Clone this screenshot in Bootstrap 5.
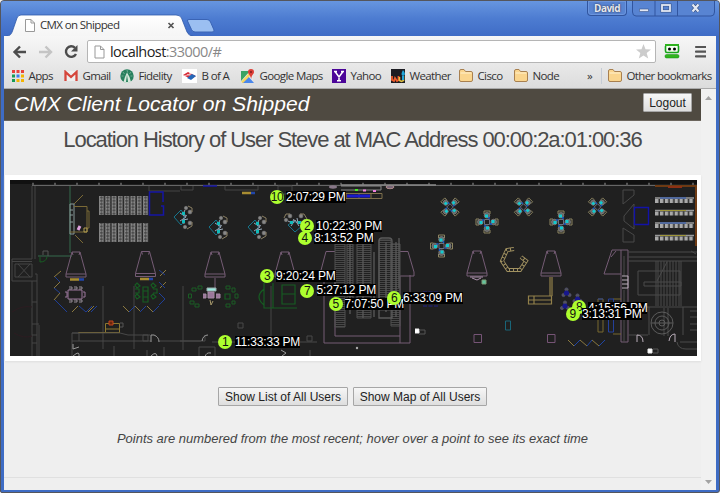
<!DOCTYPE html>
<html lang="en">
<head>
<meta charset="utf-8">
<title>CMX on Shipped</title>
<link href="https://cdn.jsdelivr.net/npm/bootstrap@5.3.0/dist/css/bootstrap.min.css" rel="stylesheet">
<style>
html,body{height:100%;margin:0;overflow:hidden}
body{font-family:"Liberation Sans",Arial,sans-serif;background:#f2f2f2;color:#444;line-height:1.2}
svg{display:block;flex:none}
.win{width:720px;height:493px;background:#3e6cc4;border:1px solid #55565c;border-radius:4px 4px 3px 2px;padding:0 2px 2px 2px;overflow:hidden}
.titlebar{height:35px;margin:0 -2px;background:linear-gradient(#6796e0,#4d7cd1 50%,#3f6cc6);flex:none}
.tabs-art{width:250px;height:35px}
.tab-label{left:39px;top:16px}
.chrome-text{font-family:"Open Sans","Noto Sans",sans-serif;font-size:11.5px;letter-spacing:-.62px;line-height:16px;color:#333;white-space:nowrap}
.winbtn{height:15px;border:1px solid #31559f;border-top:0;background:#5884d2;box-shadow:inset 0 0 0 1px #6b95dd}
.user-chip{width:40px;border-radius:0 0 4px 4px;font:700 10px/14px "Open Sans",sans-serif;letter-spacing:-.5px;color:#e6e8ee;text-shadow:0 0 2px #223;margin-right:5px}
.toolbar{height:53px;margin:0 1px;background:linear-gradient(#f7f7f7,#dcdcdc);border-bottom:1px solid #aaa;flex:none}
.addr-row{height:27px;padding:4px 0 0 8px}
.addr{width:569px;height:23px;border:1px solid #b5b5b5;border-radius:2px;background:#fff;padding:0 4px 0 6px}
.url{font-family:"Open Sans","Noto Sans",sans-serif;font-size:14.5px;line-height:20px;letter-spacing:-.55px;color:#222;padding-left:5px}
.url span{color:#888}
.marks{display:grid;grid-template-columns:53px 56px 62px 59px 91px 59px 68px 55px 73px 14px 1fr;height:25px;padding-left:7px;align-items:center}
.marks>div{display:flex;align-items:center;gap:4.5px}
.sep{border-left:1px solid #c5ccd5;padding-left:6px}
.page{margin:0 1px;background:#efefef;flex:1;min-height:0}
.doc{width:697px}
.appbar{height:32px;background:#4f4a41;border-bottom:1px solid #6b655d;padding:0 9px 0 10px}
.brand{font-size:21.1px;font-style:italic;color:#fff;line-height:30px;white-space:nowrap}
.sysbtn{font-family:inherit;font-size:12px;line-height:14px;color:#222;background:linear-gradient(#f6f6f6,#dedede);border:1px solid #a6a6a6;padding:0;height:19px;text-align:center;white-space:nowrap;border-radius:1px}
.title-line{font-size:22px;letter-spacing:-1.07px;line-height:24px;color:#4b4b4b;height:54px;padding-top:7px;white-space:nowrap;margin:0;font-weight:400}
.mapbox{height:186px;margin-left:1px;border:5px solid #fff;border-right-width:4px;background:#202020;box-shadow:0 1px 2px #ddd}
.plan{width:687px;height:176px}
.pin{width:14px;height:14px;border-radius:50%;background:#adff2f;color:#111;font-size:12px;line-height:14px;text-align:center;letter-spacing:-.5px}
.stamp{background:#000;color:#fff;font-size:12px;line-height:12px;height:12px;letter-spacing:-.18px;white-space:nowrap}
.hint{font-size:12.95px;font-style:italic;color:#444;white-space:nowrap;line-height:16px}
.lower{height:117px;border-bottom:1px solid #e0e0e0;padding-top:26px}
.scroller{width:15px;padding:7px 0 6px;background:#f1f1f1}
</style>
<script src="https://cdn.jsdelivr.net/npm/bootstrap@5.3.0/dist/js/bootstrap.bundle.min.js"></script>
</head>
<body>
<div class="win d-flex flex-column">
  <div class="titlebar d-flex justify-content-between position-relative">
    <svg class="tabs-art" viewBox="1 1 250 35"><defs><linearGradient id="tabg" x2="0" y2="1"><stop stop-color="#fff"/><stop offset="1" stop-color="#f5f5f5"/></linearGradient></defs>
      <path d="M4 36.500C10 36 11 35 12.500 31L17 18Q18 15 21 15H176Q180 15 181.500 18L187 32Q188.500 36 194 36.500Z" fill="url(#tabg)" stroke="#315aa9" stroke-width=".8"/>
      <path d="M189 19.500H207Q209.500 19.500 210.500 22L214 30Q214.500 32 212 32H195Q192.500 32 191.500 29.500L187.500 21Q187 19.500 189 19.500Z" fill="#9bbff1" stroke="#3a64b5"/>
      <path d="M25.500 19.500H31L34.500 23V31.500H25.500ZM31 19.500V23H34.500" fill="#fff" stroke="#999"/>
      <path d="m168.500 23 5 5m0-5-5 5" stroke="#555" stroke-width="1.700"/></svg>
    <span class="chrome-text tab-label position-absolute">CMX on Shipped</span>
    <div class="d-flex pe-1">
      <div class="winbtn user-chip text-center">David</div>
      <svg width="83" height="16" viewBox="633 1 83 16"><path d="M633.500 0V12Q633.500 16 637 16H712Q715.500 16 715.500 12V0" fill="#5884d2" stroke="#31559f"/><path d="M656 1V16M678.500 1V16" stroke="#31559f"/><path d="M640.500 9h9v2.500h-9z" fill="#e3e8f3" stroke="#3b5689" stroke-width=".6"/><rect x="663" y="5" width="8" height="6" fill="none" stroke="#3b5689" stroke-width="3"/><rect x="663" y="5" width="8" height="6" fill="none" stroke="#e3e8f3" stroke-width="1.800"/><path d="m693.500 4.500 6 7m0-7-6 7" stroke="#3b5689" stroke-width="3.500"/><path d="m693.500 4.500 6 7m0-7-6 7" stroke="#e3e8f3" stroke-width="2.200"/></svg>
    </div>
  </div>
  <div class="toolbar">
    <div class="addr-row d-flex">
      <svg width="75" height="23" viewBox="12 40 75 23" fill="none" stroke-width="2.400"><path d="M26 52H14.500M20 46.500 14.500 52 20 57.500" stroke="#4c4c4c"/><path d="M39 52H50.500M45.500 46.500 51 52 45.500 57.500" stroke="#c4c4c4"/><path d="M75 47.800A5.300 5.300 0 1 0 76 54" stroke="#4c4c4c"/><path d="M77.500 45V51.500H71Z" fill="#4c4c4c"/></svg>
      <div class="addr d-flex align-items-center">
        <svg width="11" height="14" viewBox="0 0 11 14"><path d="M1 1H6.500L10 4.500V13H1ZM6.500 1V4.500H10" fill="#fff" stroke="#999"/></svg>
        <div class="url">localhost<span>:33000/#</span></div>
        <svg class="ms-auto" width="15" height="15" viewBox="0 0 15 15"><path d="m7.500 0 2 5.200 5.500.3-4.300 3.500 1.500 5.500-4.700-3-4.700 3L4.300 9 0 5.500l5.500-.3Z" fill="#ccc"/></svg>
      </div>
      <svg width="50" height="23" viewBox="656 40 50 23"><rect x="665.500" y="45" width="13" height="7.500" rx="1.500" fill="#f4fff0" stroke="#18a51b" stroke-width="1.600"/><path d="M665 45h14" stroke="#2db21d" stroke-width="2"/><circle cx="669.500" cy="49" r="1.500"/><circle cx="674.500" cy="49" r="1.500"/><rect x="665" y="54.500" width="14" height="3.500" rx="1.500" fill="#31b51d" stroke="#15891b" stroke-width=".5"/><path d="M696 47h10M696 51.700h10M696 56.400h10" stroke="#555" stroke-width="2.200" stroke-linecap="round"/></svg>
    </div>
    <div class="marks chrome-text">
      <div><svg width="13" height="13" viewBox="0 0 13 13"><path d="M1 1h3v3H1zM5.500 1h3v3h-3z" fill="#e7413b"/><path d="M10 1h3v3h-3z" fill="#e7413b"/><path d="M1 5.500h3v3H1z" fill="#169b55"/><path d="M5.500 5.500h3v3h-3z" fill="#3b7ded"/><path d="M10 5.500h3v3h-3z" fill="#f4b400"/><path d="M1 10h3v3H1z" fill="#169b55"/><path d="M5.500 10h3v3h-3zM10 10h3v3h-3z" fill="#f4b400"/></svg>Apps</div>
      <div><svg width="14" height="12" viewBox="0 0 14 12"><path d="M1 1h12v10H1z" fill="#eee"/><path d="M1.500 11V2L7 7l5.500-5V11" fill="none" stroke="#d5453b" stroke-width="2.300"/></svg>Gmail</div>
      <div><svg width="14" height="14" viewBox="0 0 14 14"><circle cx="7" cy="7" r="6.700" fill="#28805e"/><path d="M7 3.500 9.500 8 11 13Q7 15 3.500 13L5 8Z" fill="#d6e8db"/><path d="M7 5.500 8 13H6Z" fill="#28805e"/><path d="m7 1 .6 2.500M3 3l1.500 2M11 3 9.500 5M1.500 7h2M12.500 7h-2" stroke="#9bc8b0" stroke-width=".6"/></svg>Fidelity</div>
      <div><svg width="15" height="14" viewBox="0 0 15 14"><path d="M0 0h15v14H0z" fill="#fff"/><path d="m1 6 5-3 8 4-5 3Z" fill="#d72a37"/><path d="m7 4 7 2-1.500 1.500L5 5.500M2 7l7-2" stroke="#fff" stroke-width=".6" fill="none"/><path d="m5 9 5-4 4 2-5 4Z" fill="#2567b9"/></svg>B of A</div>
      <div><svg width="14" height="14" viewBox="0 0 14 14"><path d="M0 2h12v12H0z" fill="#e8e8e8"/><path d="M0 2h9L0 12Z" fill="#3ba462"/><path d="m1 14 6-7 6 7Z" fill="#4b87ea"/><path d="m0 13 9-10 2 2-9 9Z" fill="#f7d65b"/><path d="M10 0a3 3 0 0 1 3 3C13 5 10.500 6 10.200 10 9.500 6 7 5 7 3a3 3 0 0 1 3-3" fill="#dc3e36"/><circle cx="10" cy="3" r="1" fill="#7f1d20"/></svg>Google Maps</div>
      <div><svg width="14" height="14" viewBox="0 0 14 14"><path d="M0 0h14v14H0z" fill="#4b0598"/><path d="M3 2.500 7 8l4-5.500M7 7.500V12M2 2.500h3M9 2.500h3M5 11.700h4" stroke="#fff" stroke-width="1.500" fill="none"/></svg>Yahoo</div>
      <div><svg width="14" height="14" viewBox="0 0 14 14"><path d="M0 0h14v14H0z" fill="#1c1c22"/><path d="M1 7v4l2 1 1-3 2 3 1.500-1V7" stroke="#ed5a2b" stroke-width="1.800" fill="none"/><path d="M8.500 8v3.500l2 1 2-1V7" stroke="#dfc142" stroke-width="1.500" fill="none"/><path d="M12 1q4 5 0 6-3-1 0-6M11 7h2v4h-2z" fill="#21a6d9"/></svg>Weather</div>
      <div><svg width="14" height="13" viewBox="0 0 14 13"><path id="fold" d="M.5 3V2Q.5.500 2 .5H5L6.500 2.500H12Q13.500 2.500 13.500 4V11Q13.500 12.500 12 12.500H2Q.5 12.500.5 11Z" fill="#fad58e" stroke="#a88050"/><path d="M1.500 4h11" stroke="#fff1ce"/></svg>Cisco</div>
      <div><svg width="14" height="13" viewBox="0 0 14 13"><use href="#fold"/><path d="M1.500 4h11" stroke="#fff1ce"/></svg>Node</div>
      <div>»</div>
      <div class="sep"><svg width="14" height="13" viewBox="0 0 14 13"><use href="#fold"/><path d="M1.500 4h11" stroke="#fff1ce"/></svg>Other bookmarks</div>
    </div>
  </div>
  <div class="page d-flex">
    <main class="doc">
      <header class="appbar d-flex justify-content-between align-items-start">
        <div class="brand">CMX Client Locator on Shipped</div>
        <button class="sysbtn" style="width:49px;margin-top:4px">Logout</button>
      </header>
      <h1 class="title-line text-center">Location History of User Steve at MAC Address 00:00:2a:01:00:36</h1>
      <div class="mapbox position-relative">
        <svg class="plan" viewBox="10 180 687 176" fill="none" stroke-width="1">
          <defs>
            <pattern id="seats" x="99" y="196" width="6.300" height="3.200" patternUnits="userSpaceOnUse"><rect x=".5" y=".5" width="4" height="2.200" fill="#555" stroke="#999" stroke-width=".7"/><path d="M2.500 0v3.200" stroke="#333" stroke-width=".6"/></pattern>
            <pattern id="steps" width="5" height="2" patternUnits="userSpaceOnUse"><path d="M0 .5h5" stroke="#505050" stroke-width=".8"/></pattern>
            <pattern id="desk" x="655" width="4.900" height="40" patternUnits="userSpaceOnUse"><path d="M0 0h3.500v40H0z" fill="#aaa"/></pattern>
            <path id="booth" d="M-4 0H4L10 22V25H-10V22ZM-10 22H10M-4 0-3 3M4 0 3 3" stroke="#755c75"/>
            <g id="pod"><path d="m-9 0 7-7 3 4v8l-3 3Z" stroke="#17758c"/><path d="M-3-4 3 0-3 4M2-7 0-3 4-1M1 7 0 3 5 2" stroke="#9ab" stroke-width="1"/><path d="M-1-5h3v3h-3zM-1 3h3v3h-3z" fill="#1bb" stroke="none"/><g fill="#888" stroke="#777" stroke-width=".6"><circle cx="3" cy="-9" r="1.700"/><circle cx="7" cy="-5" r="1.900"/><circle cx="7" cy="6" r="1.900"/><circle cx="2" cy="10" r="1.700"/></g><path d="m5-11 4 2v4M4 12l5-3V5" stroke="#8a7f62"/></g>
            <g id="quad"><g id="arm"><path d="M-3-8v-3h6v3" stroke="#8c8460"/><circle cy="-6.700" r="2.800" fill="#666" stroke="#888" stroke-width=".7"/><path d="M-2-7.500h3v3h-3z" fill="#12cbd0"/><path d="M2-5v2" stroke="#1559c9" stroke-width="1.500"/></g><use href="#arm" transform="rotate(90)"/><use href="#arm" transform="rotate(180)"/><use href="#arm" transform="rotate(270)"/><path d="M-2.500-2.500h5v5h-5z" stroke="#6b7080"/></g>
            <g id="trio" fill="#17178d" stroke="#55557a" stroke-width=".7"><circle cy="-3.500" r="1.600" fill="#555"/><circle cx="-3" cy="2" r="1.600" fill="#555"/><circle cx="3" cy="2" r="1.600" fill="#555"/><circle r="2.600" stroke="none"/></g>
          </defs>
          <path fill="#202020" d="M10 180h687v177H10z"/>
          <path d="M10 182h687" stroke="#111" stroke-width="4"/>
          <path d="M32 185.500H697" stroke="#666"/><path d="M32 184h665" stroke="#555" stroke-width="2.500" stroke-dasharray="2 20"/>
          <path d="M32 186V259H12V281H32V357M35 186V259M35 274H37V356M12 261.500H32M15 264H32V277H15ZM18 264 30 277M30 264 18 277M39 325V357M32 281H37M32 302H37M32 324H39M32 335H37M32 343H37M103 286V349M134 286V349M183 286V350M271 286V350M149 186V191H180M225 186V190H258V186M278 186h14v8h-14zM181 186v4h12v-4" stroke="#454545"/>
          <path d="M70 186V253M38 256H72" stroke="#356b4c"/><path d="M40 257v5q6 0 7-5" stroke="#165c22"/><path d="M43 255v-4h5v5" stroke="#555"/>
          <path d="M70 204h4v30h-4zM70 210h3M70 215h3M70 222h3" stroke="#899"/><path d="M74 206.500H87V232H70M87 211h2v17h-2M74 204l9-9M75 235l8 8" stroke="#7b6a36"/><path d="M84 228h3v4h-3z" stroke="#b09c50"/><path d="m78 230 2-4" stroke="#dca0dc" stroke-width="3"/>
          <path d="M99 196h49.500v19H99zM99 223h49.500v19H99z" fill="url(#seats)"/>
          <path d="M163 202V192H149.500V215H163.500V206H161M203 186h14" stroke="#1515a5" stroke-width="1.500"/>
          <use href="#booth" x="76" y="252"/><use href="#booth" x="145.500" y="251.500"/><use href="#booth" x="215" y="252"/><use href="#booth" x="285" y="252"/><use href="#booth" x="477" y="251"/><use href="#booth" x="551" y="251"/>
          <path d="M335 251.500H326L320 274V277H335V336M324 277V343H410V275M335 336H400M400 251.500H408L414 272V276H400V343M215 278v10M604 274 612 250H628V342H621V250M604 274H621M616 251l-5 6" stroke="#755c75"/>
          <path d="M70 279.500h9M140 279h9M242 193h9" stroke="#a88d32" stroke-width="2.500"/><path d="M79 279.500h5M149 279h4M251 193h4" stroke="#2146a9" stroke-width="2.500"/>
          <path d="m61 271-7 6m6 5-6 6m6 5-6 7m18 12 6-6m10 6 6-6M129 312l-6-6m18 6-6-6m18 6-6-6m13-30 6-6m-6 18 6-6" stroke="#8b793f"/><path d="m55 277 5 5m-6 6 6 5m-5 7 6 6 6 6m12-6 7 6 6-6m-1 6 6-6M129 312l6-6m5 6 6-6m7 6 6-6m0-36 6 5m-6 7 6 6m-6 5 6 6-6 6" stroke="#1f3f97"/>
          <g stroke="#928a93"><path d="M68 290h14v9H68zM65 292h2v5h-2M83 292h2v5h-2" stroke="#9b779b"/><path d="M69 287h3v2h-3M74 287h3v2h-3M79 287h3v2h-3M69 300h3v2h-3M74 300h3v2h-3M79 300h3v2h-3"/></g>
          <path d="M143 287h5v15h-5zM143 291h5M143 297h5M137 283l3 3-3 2-2-3zM153 283l3 3-3 2-2-3zM135 289h4v4h-4M153 289h4v4h-4M137 294l3 3-3 2-2-3zM153 294l3 3-3 2-2-3zM225 294h5v5h-5zM264 283v25h33M273 283v25M282 285h13v19h-13zM282 294h13M264 289q-10 8 0 16" stroke="#165c22" stroke-width="1.200"/>
          <g stroke="#1a5c24"><path d="M198 286h4v3h-4zM192 288h4v3h-4zM188.500 294h3v4h-3zM190 301h4v3h-4zM195 304h4v3h-4zM226 286h4v3h-4zM232 288h3v4h-3zM235 294h3v4h-3zM232 301h3v3h-3zM226 304h4v3h-4z"/></g><path d="M207 288h9v3h-9z" fill="#9cebe0" stroke="#9aa"/><path d="M208 292h6v6h-6zM203 294h3v4h-3M216 294h4v4h-4" fill="#9b779b" stroke="#a58ba5"/><path d="m210 300 1 5 2-4" stroke="#a89a6c"/>
          <path d="M105.500 323.500h14v9h-14zM105 329h14M78 332.500h42" stroke="#8d7930"/><path d="M109 321h4v4h-4z" fill="#6a250e" stroke="#c2461a"/><path d="M120 323h3v4h-3" stroke="#555"/>
          <path d="M72 357V333H120L128 335H150M72 341H151M72 333h7v8M143 335h5v6h-5zM159 341H205V335M180 341h21M212 342h105M114 346v11M147 350v7M164 347v10M199 357v-10h16v10M238 323h5v5h-5zM307 336h5v5h-5zM310 350v7" stroke="#484848"/><path d="M151 342v-7h3q5 2 5 7M202 341q1-6 6-6M73 344v5l6-2M73 356q7-6 6 0M151 356q5-5 6 0M205 357q1-5 6-4M281 350l5 3-4 3" stroke="#999"/>
          <use href="#pod" x="183" y="217"/><use href="#pod" x="218" y="227"/><use href="#pod" x="257" y="227"/><use href="#pod" transform="translate(295 223) rotate(-90)"/>
          <path d="M341 186h40v4h-40" stroke="#888" stroke-width="1"/><path d="M335 193.500h47v5h-47zM346 194v5M359 194v5M371 194v5" stroke="#7f704c"/><path d="M347 196h23" stroke="#1a1acb" stroke-width="3"/><path d="M355 190h3" stroke="#49ec27" stroke-width="2"/><path d="M363 190.500h3M373 191h3" stroke="#ef80df" stroke-width="2"/><ellipse cx="390" cy="187" rx="4" ry="1.700" stroke="#a88" fill="#776677"/><ellipse cx="333" cy="187" rx="4" ry="1.700" fill="#887788"/><path d="M341 185h95" stroke="#888" stroke-width="1.500"/>
          <g><path d="M335 244h10v83h-10zM347 244h6v65h-6zM357 243h14v75h-14zM379 240h12v70h-12zM391 244h9v82h-9z" fill="url(#steps)" stroke="#505050"/><path d="M379 318V241q0-3 3-3h7q3 0 3 3V318zM350 242v72M363 240v78M386 242v70M396 242v75M399 238v50M374 252v65" stroke="#5a5a5a" stroke-width="1.300"/></g>
          <g><use href="#quad" transform="translate(450 207) rotate(45) scale(.92)"/><use href="#quad" transform="translate(523.500 207) rotate(45) scale(.92)"/><use href="#quad" transform="translate(597.500 207) rotate(45) scale(.92)"/><use href="#quad" x="487" y="222"/><use href="#quad" x="441.500" y="246"/><use href="#quad" x="561" y="222"/></g>
          <path d="m514 249-7 1-5 11 6 9h12l6-9-5-4" stroke="#a19160" stroke-width="4"/><path d="m514 249-7 1-5 11 6 9h12l6-9-5-4" stroke="#202020" stroke-width="2.200" stroke-dasharray="3 1"/>
          <path d="M470 277h13M472 278l5 2 4-2" stroke="#ad92ad"/><path d="M482 280h4v4h-4z" fill="#64c5a0" stroke="#7d9b75"/><path d="M423 292h16M423 306h16" stroke="#20208c" stroke-dasharray="4 1.500"/>
          <path d="M505.500 321h5v9h-5z" stroke="#196578"/><path d="M474 334.500h7.500v8H474zM547.500 334.500h7.500v8h-7.500z" stroke="#765476"/><path d="M415 329h4v4h-4M648 349h4v4h-4z" fill="#fff" stroke="#eee"/><path d="M419 330h6v4h-6M653 349h5v4h-5" stroke="#555"/><circle cx="357" cy="348" r="1.200" fill="#aaa"/>
          <path d="M528.500 296h23v8h-23zM534 296v8M529 300h22M550 277v19M552 277v19" stroke="#92804a" stroke-width="1.200"/>
          <use href="#trio" x="566.500" y="293"/><use href="#trio" x="577.500" y="299"/><use href="#trio" x="565" y="306"/>
          <path d="M598 299h5v33h-5zM613 299h8M613 334h8" stroke="#79692e"/><path d="M608.500 299h5v33h-5zM598 299h5" stroke="#24409b"/>
          <path d="m568 340 6 6m6-6 7 6m5-6 7 6" stroke="#8b793f"/><path d="m574 346 6-6m7 6 5-6m7 6 6-6" stroke="#1f45a4"/>
          <path d="M623 190h11v5l-11 9ZM634 204l-10 12v5l10 8ZM623 228l11 7v7h-11Z" stroke="#484848"/><path d="M634.500 207.500h14v17h-14z" stroke="#1212a8" stroke-width="1.400"/>
          <path d="M655 186H697M696 186V246" stroke="#6d3a13" stroke-width="2"/><path d="M668 187h14" stroke="#8c3014" stroke-width="2"/>
          <g fill="url(#desk)"><path d="M655 199h39v4h-39zM655 211.500h39v4h-39zM655 224h39v4h-39zM655 236.500h39v4h-39z"/></g><path d="M655 198h39M655 210.500h39M655 223h39M655 235.500h39" stroke="#999" stroke-width="1.500"/><path d="M660 198h26M660 223h26" stroke="#2858bd" stroke-width="1.200"/><path d="M660 210.500h26M660 235.500h26" stroke="#9f9639" stroke-width="1.200"/>
          <path d="M628 252h69M628 257h69M628 261h69M691 251l5 3M638 271h42v24h-42zM658 261v45M661 261v45M664 261v45M667 261v45M670 261v45M673 261v45M676 261v45M679 261v45M656 261v45M681 261v45M657 281l10-19M644 282h37v4h-37zM624 256v20M624 290v52M628 307h69M649 307v28M683 307v28M628 335h20M664 308v28M668 308v28M690 311h7M690 317h7M690 324h7M690 330h7M680 342h17M677 342q1 7 9 7h11" stroke="#4a4a4a"/><circle cx="662" cy="323" r="11" stroke="#5c5c5c"/><circle cx="662" cy="323" r="7" stroke="#5c5c5c"/><circle cx="662" cy="323" r="3" stroke="#5c5c5c"/><path d="M651 323h22" stroke="#5c5c5c"/><path d="M637 342v-7q6 0 6 7M669 341q1-7 6-7v8M622 276h6v12h-6M622 280h6M622 284h6" stroke="#b9adb9"/>
          <path d="M12 312q10-7 20-5M14 333q10 6 18 3" stroke="#2c1c20"/>
        </svg>
        <div id="pins"></div>
      </div>
      <div class="lower d-flex flex-column align-items-center">
        <div class="d-flex" style="gap:5px"><button class="sysbtn" style="width:130px">Show List of All Users</button><button class="sysbtn" style="width:134px">Show Map of All Users</button></div>
        <div class="hint" style="margin-top:25px">Points are numbered from the most recent; hover over a point to see its exact time</div>
      </div>
    </main>
    <div class="scroller d-flex flex-column justify-content-between align-items-center">
      <svg width="7" height="4" viewBox="0 0 7 4"><path d="M0 4 3.500 0 7 4Z" fill="#a3a3a3"/></svg>
      <svg width="7" height="4" viewBox="0 0 7 4"><path d="M0 0 3.500 4 7 0Z" fill="#a3a3a3"/></svg>
    </div>
  </div>
</div>
<script>
// number, centre x, centre y, label x, label y, label width, time
const visits=[[1,225,341.5,235,335.5,65,'11:33:33 PM'],[2,307,226,316,220,66,'10:22:30 PM'],[3,267,275.5,276,269.5,59.5,'9:20:24 PM'],[4,304.5,238,314,231.5,59.5,'8:13:52 PM'],[5,335.5,303.5,344.5,298,59.5,'7:07:50 PM'],[6,394,298,403,292,59.5,'6:33:09 PM'],[7,307,290.5,316.5,284,59.5,'5:27:12 PM'],[8,579,307,588,302,59,'4:15:56 PM'],[9,572.5,313.5,582,307.5,59.5,'3:13:31 PM'],[10,277,197,286,191,59.5,'2:07:29 PM']];
document.getElementById('pins').innerHTML=visits.map(([n,x,y,lx,ly,w,t])=>`<div class="stamp position-absolute" style="left:${lx-10}px;top:${ly-180}px;width:${w}px">${t}</div><div class="pin position-absolute" style="left:${x-17}px;top:${y-187}px">${n}</div>`).join('');
</script>
</body>
</html>
